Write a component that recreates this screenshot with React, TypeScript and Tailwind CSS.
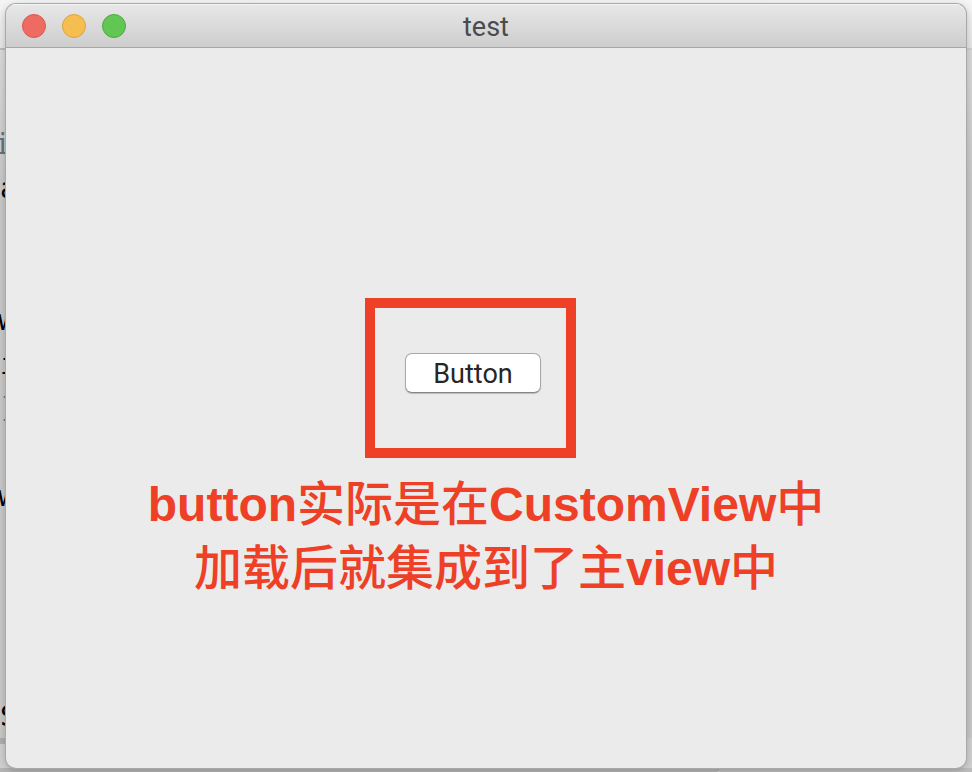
const codeLines = [
  { text: 'i', style: '-ml-[6px] text-[#66727f]' },
  { text: 'a', style: 'text-black' },
  { text: '', style: '' },
  { text: '', style: '' },
  { text: 'w', style: '-ml-[2px] text-black' },
  { text: 'i', style: 'text-black' },
  { text: ']', style: '-ml-[1px] text-[#777777]' },
  { text: '', style: '' },
  { text: 'w', style: '-ml-[2px] text-black' },
  { text: '', style: '' },
  { text: '', style: '' },
  { text: '', style: '' },
  { text: '', style: '' },
  { text: 'S', style: 'text-black' },
];

function Backdrop() {
  return (
    <div
      aria-hidden="true"
      className="col-start-1 row-start-1 flex min-h-0 flex-col overflow-hidden bg-[#d0d0d0]"
    >
      <div className="h-12 shrink-0 bg-linear-to-b from-[#f5f5f5] to-[#e6e6e6]" />
      <div className="h-[2px] w-3/4 shrink-0 bg-[#bcbcbc]" />
      <div className="h-[688px] shrink-0 overflow-hidden bg-linear-to-b from-[#dadada] via-[#c8c8c8] via-20% to-[#c8c8c8] pt-[73px] font-['DejaVu_Sans_Mono','Liberation_Mono',monospace] text-[28px] leading-[44px]">
        {codeLines.map((line, index) => (
          <div key={index} className="h-[44px]">
            <span className={`block ${line.style}`}>{line.text}</span>
          </div>
        ))}
      </div>
      <div className="h-[6px] w-3/4 shrink-0 bg-[#aeaeae]" />
      <div className="flex flex-1 items-end">
        <div className="h-1 w-[74%] rounded-br-lg border-r border-[#999999] bg-[#b4b4b4]" />
        <div className="h-1 flex-1 bg-[#bdbdbd]" />
      </div>
    </div>
  );
}

function TitleBar() {
  return (
    <header className="grid h-11 shrink-0 grid-cols-[1fr_auto_1fr] items-center border-b border-[#a6a6a6] bg-linear-to-b from-[#e8e8e8] to-[#cdcdcd] px-4 shadow-[inset_0_1px_0_#f5f5f5]">
      <div className="flex gap-4">
        <button aria-label="Close" className="size-6 rounded-full border border-[#d9584d] bg-[#ed6b60]" />
        <button aria-label="Minimize" className="size-6 rounded-full border border-[#dba43c] bg-[#f6be50]" />
        <button aria-label="Zoom" className="size-6 rounded-full border border-[#4caa3f] bg-[#62c655]" />
      </div>
      <h1 className="pt-[2px] text-[27px] leading-8 text-[#4b4b4b]">test</h1>
    </header>
  );
}

export default function App() {
  return (
    <div className="grid min-h-screen bg-[#d0d0d0] font-[family-name:Roboto,Inter,sans-serif]">
      <Backdrop />
      <div className="z-10 col-start-1 row-start-1 flex flex-col px-[6px] py-1">
        <section className="flex flex-1 flex-col overflow-hidden rounded-[10px] bg-[#ebebeb] shadow-[0_0_0_1px_#a9a9a9,0_2px_8px_rgba(0,0,0,0.25)]">
          <TitleBar />
          <main className="flex flex-1 flex-col items-center pt-[250px]">
            <div className="mr-[31px] flex h-40 w-[211px] items-center justify-center border-10 border-[#ed4026] pb-[10px] pl-[5px]">
              <button className="h-10 w-[136px] rounded-[7px] border border-[#a8a8a8] border-b-[#858585] bg-white pt-[2px] text-[27px] leading-8 text-[#262626] shadow-[0_1px_1px_rgba(0,0,0,0.2)]">
                Button
              </button>
            </div>
            <p className="mt-[15px] text-center font-['Liberation_Sans','Noto_Sans_CJK_SC',sans-serif] text-[48px] leading-[64px] font-bold text-[#ed4026]">
              button<span className="font-medium">实际是在</span>CustomView<span className="font-medium">中</span>
              <br />
              <span className="font-medium">加载后就集成到了主</span>view<span className="font-medium">中</span>
            </p>
          </main>
        </section>
      </div>
    </div>
  );
}
